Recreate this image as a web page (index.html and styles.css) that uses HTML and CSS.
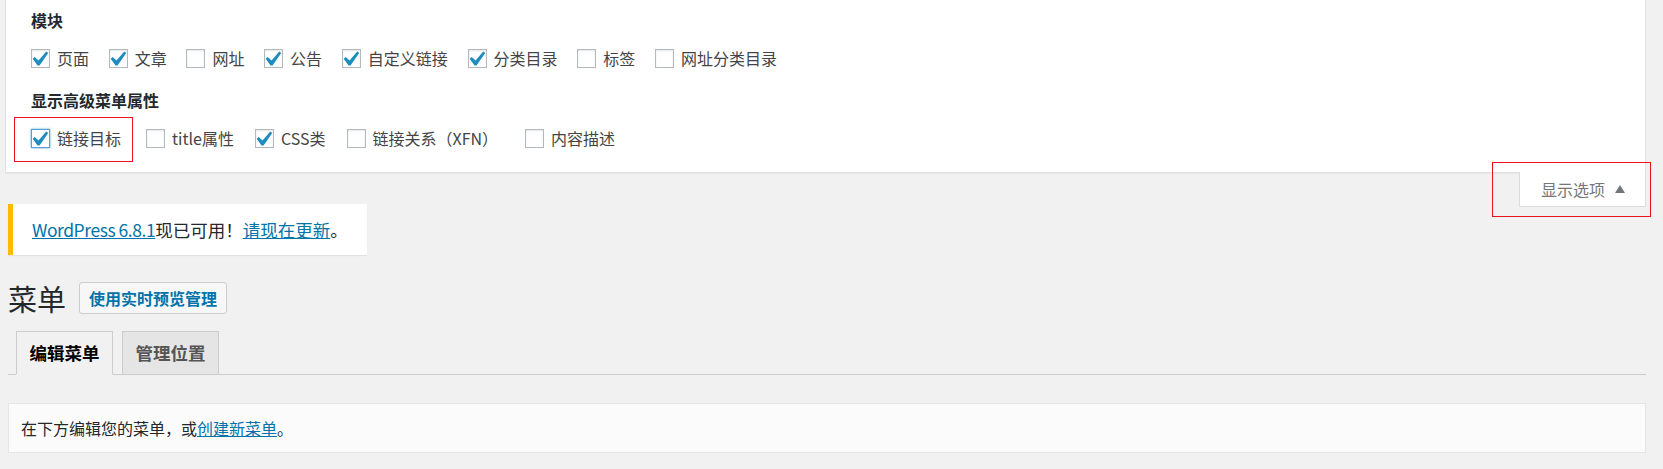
FILE: index.html
```html
<!DOCTYPE html>
<html lang="zh-CN">
<head>
    <meta charset="UTF-8">
    <meta name="viewport" content="width=device-width, initial-scale=1.0">
    <title>菜单</title>
    <link rel="stylesheet" href="styles.css">
</head>
<body>

    <!-- Screen options panel -->
    <div class="screen-meta">
        <h5>模块</h5>
        <div class="prefs-row">
            <label class="pref"><span class="cb checked"><svg viewBox="4 2.5 14 14"><path d="M14.83 4.89l1.34.94-5.81 8.38H9.02L5.78 9.67l1.34-1.25 2.57 2.4z"/></svg></span>页面</label>
            <label class="pref"><span class="cb checked"><svg viewBox="4 2.5 14 14"><path d="M14.83 4.89l1.34.94-5.81 8.38H9.02L5.78 9.67l1.34-1.25 2.57 2.4z"/></svg></span>文章</label>
            <label class="pref"><span class="cb"></span>网址</label>
            <label class="pref"><span class="cb checked"><svg viewBox="4 2.5 14 14"><path d="M14.83 4.89l1.34.94-5.81 8.38H9.02L5.78 9.67l1.34-1.25 2.57 2.4z"/></svg></span>公告</label>
            <label class="pref"><span class="cb checked"><svg viewBox="4 2.5 14 14"><path d="M14.83 4.89l1.34.94-5.81 8.38H9.02L5.78 9.67l1.34-1.25 2.57 2.4z"/></svg></span>自定义链接</label>
            <label class="pref"><span class="cb checked"><svg viewBox="4 2.5 14 14"><path d="M14.83 4.89l1.34.94-5.81 8.38H9.02L5.78 9.67l1.34-1.25 2.57 2.4z"/></svg></span>分类目录</label>
            <label class="pref"><span class="cb"></span>标签</label>
            <label class="pref"><span class="cb"></span>网址分类目录</label>
        </div>
        <h5 class="second">显示高级菜单属性</h5>
        <div class="prefs-row advanced">
            <label class="pref marked"><span class="cb checked focused"><svg viewBox="4 2.5 14 14"><path d="M14.83 4.89l1.34.94-5.81 8.38H9.02L5.78 9.67l1.34-1.25 2.57 2.4z"/></svg></span>链接目标</label>
            <label class="pref"><span class="cb"></span>title属性</label>
            <label class="pref"><span class="cb checked"><svg viewBox="4 2.5 14 14"><path d="M14.83 4.89l1.34.94-5.81 8.38H9.02L5.78 9.67l1.34-1.25 2.57 2.4z"/></svg></span>CSS类</label>
            <label class="pref xfn"><span class="cb"></span>链接关系（XFN）</label>
            <label class="pref"><span class="cb"></span>内容描述</label>
        </div>
    </div>

    <div class="meta-links">
        <button class="meta-toggle">显示选项<span class="arrow"></span></button>
    </div>

    <!-- Update notice -->
    <div class="update-nag">
        <a href="#" class="version">WordPress 6.8.1</a>现已可用！<a href="#">请现在更新</a>。
    </div>

    <div class="wrap">
        <div class="page-title">
            <h1>菜单</h1>
            <a href="#" class="title-action">使用实时预览管理</a>
        </div>

        <nav class="nav-tabs">
            <a href="#" class="nav-tab active">编辑菜单</a>
            <a href="#" class="nav-tab">管理位置</a>
        </nav>

        <div class="manage-menus">
            在下方编辑您的菜单，或<a href="#">创建新菜单</a>。
        </div>
    </div>

</body>
</html>
```

FILE: styles.css
```css
body {
    margin: 0;
    background-color: #f1f1f1;
    font-family: "Noto Sans CJK SC", sans-serif;
    font-size: 16px;
    color: #444;
}
a {
    color: #0073aa;
}

/* screen options panel */
.screen-meta {
    margin: 0 17px 0 5px;
    padding: 10px 25px 12px;
    background-color: #fff;
    border: 1px solid #e1e1e1;
    border-top: none;
    box-shadow: 0 1px 1px rgba(0, 0, 0, 0.04);
}
.screen-meta h5 {
    margin: 0;
    font-size: 16px;
    line-height: 20px;
    font-weight: 700;
    color: #23282d;
}
.screen-meta h5.second {
    margin-top: 10px;
}
.prefs-row {
    display: flex;
    align-items: center;
    height: 44px;
    margin-top: 6px;
}
.pref {
    position: relative;
    display: flex;
    align-items: center;
    height: 19px;
    margin-right: 19.7px;
    line-height: 19px;
    white-space: nowrap;
}
.advanced .pref {
    margin-right: 21px;
}
.advanced .pref.marked {
    margin-right: 25px;
}
.advanced .pref.xfn {
    margin-right: 27px;
}
.cb {
    box-sizing: border-box;
    display: flex;
    align-items: center;
    justify-content: center;
    width: 19px;
    height: 19px;
    margin-right: 7px;
    background-color: #fff;
    border: 1px solid #b4b9be;
    box-shadow: inset 0 1px 2px rgba(0, 0, 0, 0.1);
}
.cb svg {
    width: 21px;
    height: 21px;
    flex-shrink: 0;
    fill: #1e8cbe;
}
.cb.focused {
    border-color: #5b9dd9;
    box-shadow: 0 0 2px rgba(30, 140, 190, 0.8);
}
/* red annotation boxes */
.pref.marked::after {
    content: "";
    position: absolute;
    left: -17px;
    right: -12px;
    top: -12px;
    bottom: -14px;
    border: 1px solid #e8141b;
}

/* screen options toggle */
.meta-links {
    float: right;
    margin-right: 17px;
}
.meta-toggle {
    position: relative;
    display: flex;
    align-items: center;
    height: 35px;
    margin-top: -1px;
    padding: 0 20px 0 21px;
    background-color: #fff;
    border: 1px solid #ddd;
    border-top: none;
    font-family: inherit;
    font-size: 16px;
    color: #72777c;
}
.meta-toggle::after {
    content: "";
    position: absolute;
    left: -28px;
    right: -6px;
    top: -10px;
    bottom: -11px;
    border: 1px solid #e8141b;
}
.arrow {
    margin-left: 10px;
    width: 0;
    height: 0;
    border-left: 5px solid transparent;
    border-right: 5px solid transparent;
    border-bottom: 8px solid #72777c;
}

/* update notice */
.update-nag {
    display: inline-block;
    margin: 31px 0 0 8px;
    padding: 14px 19px;
    line-height: 23px;
    font-size: 17.5px;
    color: #23282d;
    background-color: #fff;
    border-left: 5px solid #ffba00;
    box-shadow: 0 1px 1px rgba(0, 0, 0, 0.06);
}
.update-nag .version {
    letter-spacing: -0.45px;
}

.wrap {
    clear: both;
    margin: 0 17px 0 8px;
}
.page-title {
    display: flex;
    align-items: center;
    margin-top: 27px;
    height: 32px;
}
.page-title h1 {
    margin: 0 13px 0 0;
    font-size: 29px;
    font-weight: 400;
    line-height: 32px;
    color: #23282d;
}
.title-action {
    box-sizing: border-box;
    height: 32px;
    padding: 0 9px;
    line-height: 30px;
    font-size: 16px;
    font-weight: 700;
    text-decoration: none;
    background-color: #f7f7f7;
    border: 1px solid #ccc;
    border-radius: 3px;
}

/* tabs */
.nav-tabs {
    display: flex;
    margin-top: 17px;
    padding-left: 8px;
    border-bottom: 1px solid #ccc;
}
.nav-tab {
    margin-right: 9px;
    margin-bottom: -1px;
    padding: 6px 12.5px;
    line-height: 30px;
    font-size: 17.5px;
    font-weight: 700;
    color: #555;
    text-decoration: none;
    background-color: #e5e5e5;
    border: 1px solid #ccc;
}
.nav-tab.active {
    color: #000;
    background-color: #f1f1f1;
    border-bottom-color: #f1f1f1;
}

.manage-menus {
    margin-top: 28px;
    padding: 12px;
    line-height: 24px;
    color: #23282d;
    background-color: #fbfbfb;
    border: 1px solid #e5e5e5;
    box-shadow: 0 1px 1px rgba(0, 0, 0, 0.04);
}
```
